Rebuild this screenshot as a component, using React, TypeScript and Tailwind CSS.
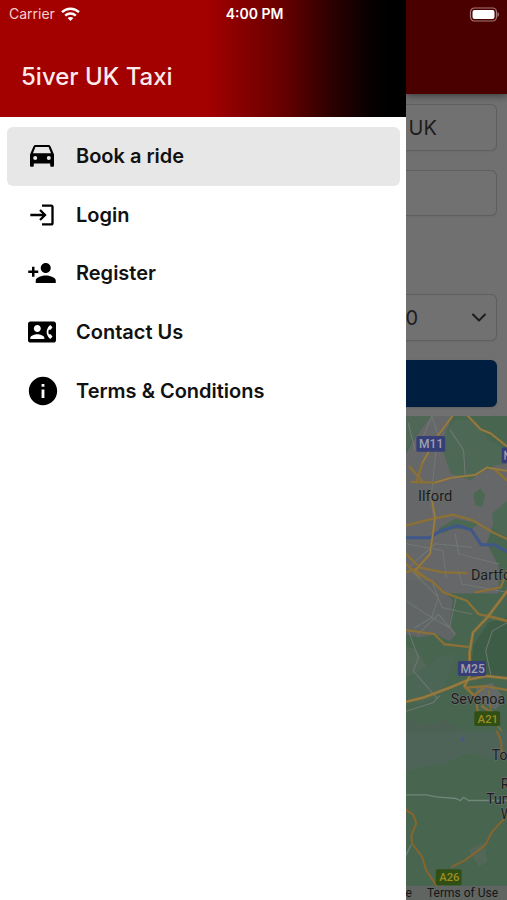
import { MdContactPhone, MdInfo, MdLogin, MdPersonAdd } from "react-icons/md";

function CarIcon() {
  return (
    <svg width="24" height="22" viewBox="0 0 24 22" fill="currentColor" aria-hidden="true">
      <path
        fillRule="evenodd"
        d="M5.500 0h13c1 0 1.800.600 2.100 1.500L24 9.500V20.500c0 .8-.5 1.300-1.300 1.300h-1.200c-.8 0-1.300-.5-1.300-1.300V18.500H3.800v2c0 .8-.5 1.300-1.300 1.300H1.300C.5 21.800 0 21.300 0 20.500V9.500L3.400 1.500C3.700.600 4.500 0 5.500 0zM5.400 2L3 8.300h18L18.600 2zM5.200 11a2 2 0 100 4 2 2 0 000-4zM18.800 11a2 2 0 100 4 2 2 0 000-4z"
      />
    </svg>
  );
}

const items = [
  { label: "Book a ride", icon: <CarIcon />, iconBox: "justify-center", active: true },
  { label: "Login", icon: <MdLogin size={28} />, iconBox: "justify-center", active: false },
  { label: "Register", icon: <MdPersonAdd size={30} />, iconBox: "justify-center", active: false },
  { label: "Contact Us", icon: <MdContactPhone size={28} />, iconBox: "justify-center", active: false },
  { label: "Terms & Conditions", icon: <MdInfo size={34} />, iconBox: "justify-end", active: false },
];

function StatusBar() {
  return (
    <div className="absolute inset-x-0 top-0 z-10 grid h-7 grid-cols-3 items-center pr-[7px] pl-[9px] text-sm text-white">
      <span className="flex items-center gap-[6px] text-[#f3d0d0]">
        Carrier
        <svg width="19" height="15" viewBox="0 0 19 15" fill="none" stroke="#fff" strokeWidth="2.4" aria-hidden="true">
          <path d="M1 5.2C5.8.6 13.2.6 18 5.2" />
          <path d="M4.2 8.6c3-2.8 7.600-2.800 10.600 0" />
          <path d="M6.600 11.100c1.800-1.500 4-1.500 5.800 0L9.500 14z" fill="#fff" stroke="none" />
        </svg>
      </span>
      <span className="text-center font-semibold">4:00 PM</span>
      <svg className="justify-self-end" width="31" height="15" viewBox="0 0 31 15" aria-hidden="true">
        <rect x="1.500" y="1" width="26" height="13" rx="4" fill="none" stroke="#a87878" strokeWidth="1.200" />
        <rect x="3.500" y="3" width="22" height="9" rx="2" fill="#fff" />
        <path d="M28.500 5v5c2-1 2-4 0-5z" fill="#a87878" />
      </svg>
    </div>
  );
}

function Drawer() {
  return (
    <aside className="flex w-4/5 shrink-0 flex-col bg-white">
      <header className="flex h-[117px] items-end bg-[linear-gradient(90deg,#a30000_0%,#a30000_51%,#650000_70%,#2f0000_81%,#080000_91%,#000000_97%)] px-[21px] pb-[24px]">
        <h1 className="text-2xl leading-8 font-medium text-[#fbeaea]">5iver UK Taxi</h1>
      </header>
      <nav className="grid h-[303px] grid-rows-5 pt-[10px] pr-[6px] pl-[7px]">
        {items.map((item) => (
          <button
            key={item.label}
            type="button"
            className={
              item.active
                ? "flex items-center gap-4 rounded-md bg-[#e7e7e7] px-[17px] text-left text-xl font-semibold text-[#111111]"
                : "flex items-center gap-4 rounded-md px-[17px] text-left text-xl font-semibold text-[#111111]"
            }
          >
            <span className={`flex w-9 shrink-0 text-black ${item.iconBox}`}>{item.icon}</span>
            {item.label}
          </button>
        ))}
      </nav>
    </aside>
  );
}

function MapView() {
  return (
    <svg
      className="min-h-0 w-full flex-1 bg-[#47654f]"
      viewBox="0 0 303 1452"
      preserveAspectRatio="xMinYMin slice"
      role="img"
      aria-label="Map"
      fontFamily="Roboto, sans-serif"
    >
      <rect width="303" height="1452" fill="#47654f" />
      <g transform="translate(-33 -18)" fill="none" strokeLinecap="round" strokeLinejoin="round">
        <path d="M33 130L75 60 110 18h60l-20 60 20 50 60 60 50-10 55-40v150l-40 50-20 60 35 70v80H33z" fill="#656768" />
        <path d="M150 60l30-30h60l40 60 56 30v40l-60 10-50 40-60-20-20-60z" fill="#4e6856" />
        <path d="M235 250l20-15 15 20-10 35-20-5zM130 355l50-30 70 15-20 15-60 0-30 15z" fill="#4a6852" />
        <path d="M290 310l46-40v110l-40-20z" fill="#4e6856" />
        <path d="M33 120V18h75l-30 40z" fill="#506758" />
        <path d="M110 18L80 90M110 18l18 55-10 90-10 100 10 80M165 60l40 60 5 80M40 40l20 80M33 400l110 20 10 80M180 370l10 60 120 30M40 470l80-70 110 10" stroke="#727975" strokeWidth="3" />
        <path d="M33 382h70l35-22 50-14 40 12 30 45 40 0 40 22" stroke="#40578a" strokeWidth="9" />
        <path d="M172 18l-45 60-45 80-18 60M218 18l38 40 30 12 50 40M44 170l40 45M50 215l70 2 50-15 70-8 35-22 61 10M300 180l40 35M105 240l15 80-15 110-45 50M33 345l80-20 60-12 60 17 60 36 43 20M33 430l40 40 70 15 70 2M33 460l40 40M100 510l-40-35-27 10" stroke="#8b7037" strokeWidth="7" />
        <path d="M172 18l-45 60-45 80M218 18l38 40 30 12 50 40M120 217l50-15 70-8 35-22 61 10M105 240l15 80-15 110-45 50" stroke="#a48b52" strokeWidth="2" />
        <rect x="64" y="78" width="86" height="47" rx="5" fill="#363e78" />
        <rect x="319" y="112" width="40" height="47" rx="5" fill="#363e78" />
        <path d="M329 147v-24l7 14" stroke="#9fa0ad" strokeWidth="4" />
        <text x="72" y="113" fontSize="36" fontWeight="500" fill="#9fa0ad">M11</text>
        <text x="69" y="271" fontSize="44" fill="#1c1c1c" stroke="#6c6f6e" strokeWidth="4" paintOrder="stroke">Ilford</text>
      </g>
      <g transform="translate(-33 462)" fill="none" strokeLinecap="round" strokeLinejoin="round">
        <path d="M33 30h90l50 60-10 70 20 30-20 20-40-20-50 10-40-10z" fill="#626566" />
        <path d="M280 155l56-15v180l-110-10 10-90z" fill="#3e5d46" />
        <path d="M33 225l30 10 50 80-60 65-20 0z" fill="#536858" />
        <path d="M33 320l40-20 70-50 40 0-50 130-60 20-40-20z" fill="#4b6654" />
        <path d="M33 440l60 20 60-15 70 50 113-15v60H33z" fill="#4c6154" />
        <path d="M240 350l50-15 40 50-30 30-40-20z" fill="#626968" />
        <path d="M50 0l80 80-20 60-50 30M33 90l60 40 70 40 20-90M40 180l30 80-15 40 70 80M70 190l60-60 50 60M336 155l-45 25-20 60 15 70M33 420l80-25 20-20M110 30l30 80 90 20M190 0l10 40 136 25" stroke="#707874" strokeWidth="3" />
        <path d="M55 0l60 35 30 30 70 25 35 40 86 20M33 178l85 12 30 30 70 8M336 0l-20 50-75 15M265 350l-25 20 10 70M260 405l30 20M210 350l60-5 66 12" stroke="#8b7037" strokeWidth="7" />
        <path d="M336 60l-60 80-43 45-10 60 0 70-15 30 30 30M33 392l50-12 80-30 60-25 50-10 63 7M275 135l61 16" stroke="#8b7037" strokeWidth="9" />
        <path d="M336 60l-60 80-43 45-10 60 0 70-15 30M33 392l50-12 80-30 60-25 50-10 63 7" stroke="#a48b52" strokeWidth="2" />
        <path d="M280 360l5 50 20 50 20 30" stroke="#8b7037" strokeWidth="4" />
        <rect x="188" y="270" width="84" height="45" rx="5" fill="#363e78" />
        <rect x="237" y="420" width="77" height="44" rx="5" fill="#314f14" />
        <text x="196" y="305" fontSize="36" fontWeight="500" fill="#9fa0ad">M25</text>
        <text x="247" y="454" fontSize="34" fontWeight="500" fill="#9c8d20">A21</text>
        <g fontSize="43" fill="#1c1c1c" stroke="#6c6f6e" strokeWidth="4" paintOrder="stroke">
          <text x="227" y="27">Dartfo</text>
          <text x="167" y="399">Sevenoa</text>
        </g>
      </g>
      <g transform="translate(-33 942)" fill="none" strokeLinecap="round" strokeLinejoin="round">
        <path d="M33 0h303v70l-60 10-60-15-70 35-60 5-53 15z" fill="#4f6458" />
        <path d="M218 355l50-25 8 60-25 15z" fill="#536759" />
        <path d="M33 190h60l30 6 60 5 12 6 10-10 15 10h116" stroke="#70877a" strokeWidth="4" />
        <path d="M33 370l15-30" stroke="#687f70" strokeWidth="4" />
        <path d="M33 235l22 15 9 25-15 35 2 25 30 40 12 40 34 50M170 405l40-20 60-45 20-40 46-48M305 0l12 30 3 40" stroke="#87652d" strokeWidth="6" />
        <circle cx="203" cy="23" r="5" fill="#43569a" />
        <rect x="122" y="412" width="77" height="48" rx="5" fill="#314f14" />
        <text x="132" y="448" fontSize="34" fontWeight="500" fill="#9c8d20">A26</text>
        <g fontSize="42" fill="#1c1c1c" stroke="#6c6f6e" strokeWidth="4" paintOrder="stroke">
          <text x="289" y="85">To</text>
          <text x="316" y="173">R</text>
          <text x="273" y="217">Tun</text>
          <text x="316" y="261">W</text>
        </g>
      </g>
    </svg>
  );
}

function BookingPage() {
  return (
    <main className="relative flex min-w-0 flex-1 flex-col overflow-hidden bg-[#707070] text-xl text-[#1d1d1d]">
      <div className="h-[94px] shrink-0 bg-[#4b0000] shadow-[0_1px_8px_#00000090]" />
      <form className="flex h-[322px] shrink-0 flex-col pt-[10px] pr-[10px]">
        <input
          aria-label="Pickup"
          defaultValue="UK"
          className="h-[47px] w-full rounded-r-md border border-l-0 border-[#5f5f5f] bg-[#717171] pl-[3px] shadow-xs outline-none"
        />
        <input
          aria-label="Destination"
          className="mt-[19px] h-[46px] w-full rounded-r-md border border-l-0 border-[#5f5f5f] bg-[#717171] shadow-xs outline-none"
        />
        <div className="relative mt-[78px]">
          <select
            aria-label="Time"
            className="h-[47px] w-full appearance-none rounded-r-md border border-l-0 border-[#5f5f5f] bg-[#717171] shadow-xs outline-none"
          >
            <option>0</option>
          </select>
          <svg
            className="pointer-events-none absolute top-[19px] right-[11px]"
            width="14"
            height="9"
            viewBox="0 0 14 9"
            fill="none"
            stroke="#1d1d1d"
            strokeWidth="2"
            strokeLinecap="round"
            strokeLinejoin="round"
            aria-hidden="true"
          >
            <path d="M1 1.500l6 6 6-6" />
          </svg>
        </div>
        <button type="button" aria-label="Book" className="mt-[19px] h-[47px] w-full rounded-r-md bg-[#001f40] shadow-sm" />
      </form>
      <MapView />
      <footer className="absolute inset-x-0 bottom-0 flex h-[14px] items-center gap-[15px] bg-[#606562] font-[Roboto,sans-serif] text-xs leading-[14px] whitespace-nowrap text-[#161616]">
        <span>e</span>
        <a href="#terms">Terms of Use</a>
      </footer>
    </main>
  );
}

export default function App() {
  return (
    <div className="relative flex h-screen overflow-hidden font-[Inter,'Liberation_Sans',sans-serif]">
      <StatusBar />
      <Drawer />
      <BookingPage />
    </div>
  );
}
